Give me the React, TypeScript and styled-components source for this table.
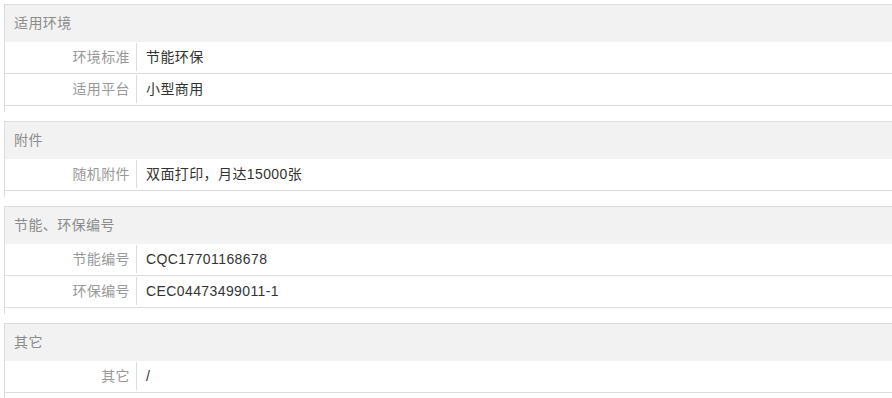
import React from 'react';
import styled, { createGlobalStyle } from 'styled-components';

const GlobalStyle = createGlobalStyle`
  html, body {
    margin: 0;
    padding: 0;
    background: #fff;
    overflow: hidden;
  }
  body {
    font-family: "Liberation Sans", "Noto Sans CJK SC", sans-serif;
    font-size: 14px;
    letter-spacing: 0.4px;
  }
`;

const Page = styled.div`
  padding: 4px 0 0 4px;
  width: 920px;
`;

const Section = styled.div`
  border-top: 1px solid #dcdcdc;
  border-left: 1px solid #dcdcdc;
  padding-bottom: 6px;
  margin-bottom: 9px;
`;

const Header = styled.div`
  height: 37px;
  line-height: 37px;
  background: #f2f2f2;
  color: #8c8c8c;
  padding-left: 9px;
`;

const Row = styled.div`
  display: flex;
  height: 31px;
  border-bottom: 1px solid #dcdcdc;
`;

const Label = styled.div`
  width: 125px;
  padding-right: 6px;
  margin: 1px 0 2px;
  border-right: 1px solid #dcdcdc;
  text-align: right;
  color: #999;
  line-height: 28px;
`;

const Value = styled.div`
  padding-left: 9px;
  color: #333;
  line-height: 30px;
`;

type Item = { label: string; value: string };
type Group = { title: string; items: Item[] };

const groups: Group[] = [
  {
    title: '适用环境',
    items: [
      { label: '环境标准', value: '节能环保' },
      { label: '适用平台', value: '小型商用' },
    ],
  },
  {
    title: '附件',
    items: [{ label: '随机附件', value: '双面打印，月达15000张' }],
  },
  {
    title: '节能、环保编号',
    items: [
      { label: '节能编号', value: 'CQC17701168678' },
      { label: '环保编号', value: 'CEC04473499011-1' },
    ],
  },
  {
    title: '其它',
    items: [{ label: '其它', value: '/' }],
  },
];

const App = () => {
  return (
    <>
      <GlobalStyle />
      <Page>
        {groups.map((g) => (
          <Section key={g.title}>
            <Header>{g.title}</Header>
            {g.items.map((it) => (
              <Row key={it.label}>
                <Label>{it.label}</Label>
                <Value>{it.value}</Value>
              </Row>
            ))}
          </Section>
        ))}
      </Page>
    </>
  );
};

export default App;
